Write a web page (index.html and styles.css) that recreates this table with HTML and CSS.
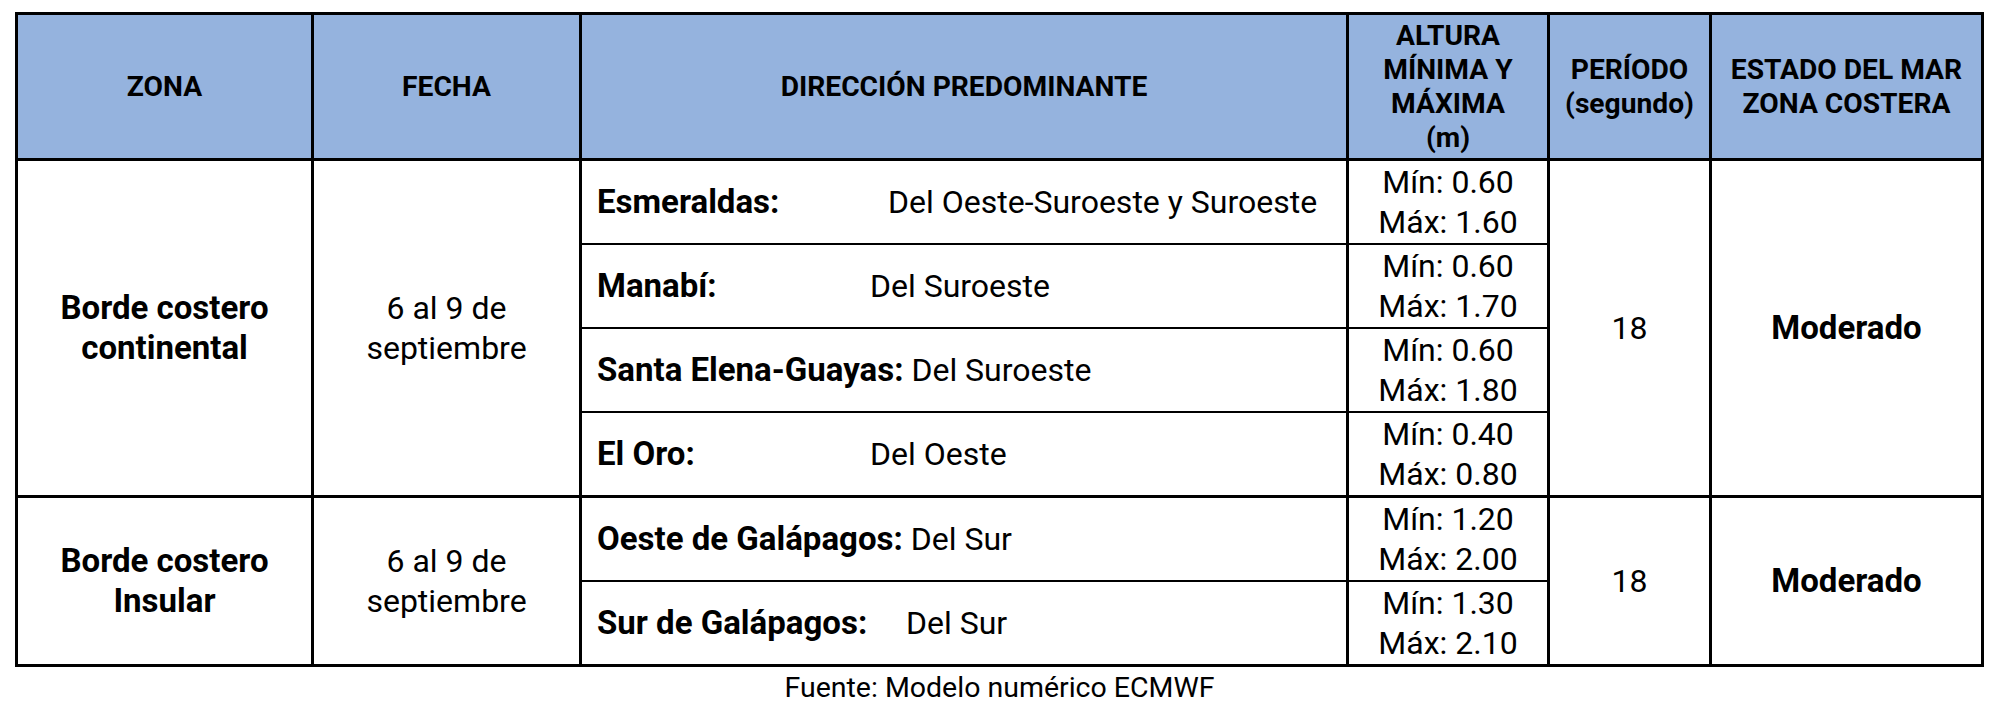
FILE: index.html
```html
<!DOCTYPE html>
<html lang="es">
<head>
<meta charset="utf-8">
<title>Estado del mar</title>
<link rel="stylesheet" href="styles.css">
</head>
<body>
<div class="page">
  <table class="forecast">
    <colgroup>
      <col class="c-zona">
      <col class="c-fecha">
      <col class="c-dir">
      <col class="c-alt">
      <col class="c-per">
      <col class="c-est">
    </colgroup>
    <thead>
      <tr>
        <th>ZONA</th>
        <th>FECHA</th>
        <th>DIRECCIÓN PREDOMINANTE</th>
        <th class="th-alt">ALTURA<br>MÍNIMA Y<br>MÁXIMA<br>(m)</th>
        <th class="th-2">PERÍODO<br>(segundo)</th>
        <th class="th-2">ESTADO DEL MAR<br>ZONA COSTERA</th>
      </tr>
    </thead>
    <tbody>
      <tr class="first">
        <td rowspan="4" class="bold">Borde costero<br>continental</td>
        <td rowspan="4">6 al 9 de<br>septiembre</td>
        <td class="sub dir"><span class="lbl tab-a">Esmeraldas:</span>Del Oeste-Suroeste y Suroeste</td>
        <td class="sub alt">Mín: 0.60<br>Máx: 1.60</td>
        <td rowspan="4">18</td>
        <td rowspan="4" class="bold">Moderado</td>
      </tr>
      <tr>
        <td class="sub dir"><span class="lbl tab-b">Manabí:</span>Del Suroeste</td>
        <td class="sub alt">Mín: 0.60<br>Máx: 1.70</td>
      </tr>
      <tr>
        <td class="sub dir"><span class="lbl">Santa Elena-Guayas:</span> Del Suroeste</td>
        <td class="sub alt">Mín: 0.60<br>Máx: 1.80</td>
      </tr>
      <tr class="last">
        <td class="sub dir"><span class="lbl tab-b">El Oro:</span>Del Oeste</td>
        <td class="sub alt">Mín: 0.40<br>Máx: 0.80</td>
      </tr>
    </tbody>
    <tbody>
      <tr class="first">
        <td rowspan="2" class="bold">Borde costero<br>Insular</td>
        <td rowspan="2">6 al 9 de<br>septiembre</td>
        <td class="sub dir"><span class="lbl">Oeste de Galápagos:</span> Del Sur</td>
        <td class="sub alt">Mín: 1.20<br>Máx: 2.00</td>
        <td rowspan="2">18</td>
        <td rowspan="2" class="bold">Moderado</td>
      </tr>
      <tr class="last">
        <td class="sub dir"><span class="lbl tab-c">Sur de Galápagos:</span>Del Sur</td>
        <td class="sub alt">Mín: 1.30<br>Máx: 2.10</td>
      </tr>
    </tbody>
  </table>
  <p class="source">Fuente: Modelo numérico ECMWF</p>
</div>
</body>
</html>
```
FILE: styles.css
```css
html, body {
  margin: 0;
  padding: 0;
  background: #ffffff;
}

body {
  font-family: Roboto, "Liberation Sans", sans-serif;
  color: #000000;
}

.page {
  padding: 12px 0 0 15px;
}

.forecast {
  border-collapse: collapse;
  table-layout: fixed;
  width: 1969px;
  font-size: 32px;
  line-height: 40px;
}

.c-zona { width: 296px; }
.c-fecha { width: 268px; }
.c-dir { width: 767px; }
.c-alt { width: 201px; }
.c-per { width: 162px; }
.c-est { width: 272px; }

.forecast th,
.forecast td {
  border: 3px solid #000000;
  padding: 0;
  text-align: center;
  vertical-align: middle;
}

.forecast th {
  background: #95b3de;
  height: 143px;
  font-weight: 700;
  font-size: 28.2px;
  line-height: 34px;
}

.forecast td {
  height: 82px;
  font-weight: 400;
}

.forecast td.bold {
  font-weight: 700;
  font-size: 33px;
}

.forecast td.sub {
  border-top-width: 2px;
  border-bottom-width: 2px;
}

.forecast tr.first td.sub {
  border-top-width: 3px;
}

.forecast tr.last td.sub {
  border-bottom-width: 3px;
}

.forecast td.dir {
  text-align: left;
  padding-left: 15px;
  white-space: nowrap;
}

.lbl {
  display: inline-block;
  font-weight: 700;
  font-size: 33px;
}

.tab-a { width: 291px; }
.tab-b { width: 273px; }
.tab-c { width: 309px; }

.source {
  margin: 5px 0 0 0;
  width: 1969px;
  text-align: center;
  font-size: 28.5px;
  line-height: 32px;
}
```
